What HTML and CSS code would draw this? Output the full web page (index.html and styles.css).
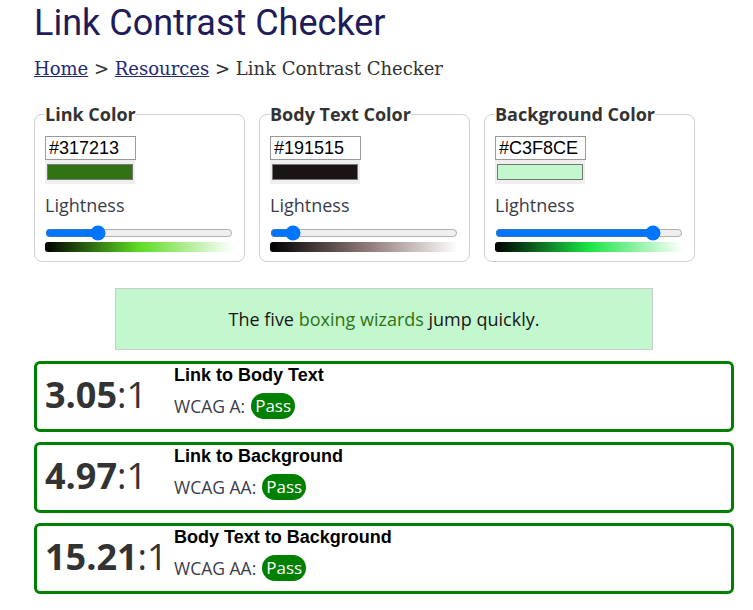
FILE: index.html
```html
<!DOCTYPE html>
<html lang="en">
<head>
<meta charset="utf-8">
<title>Link Contrast Checker</title>
<link rel="stylesheet" href="styles.css">
</head>
<body>
<main class="page">
  <h1 class="title">Link Contrast Checker</h1>
  <nav class="crumbs"><a href="#">Home</a> &gt; <a href="#">Resources</a> &gt; Link Contrast Checker</nav>

  <div class="pickers">
    <fieldset class="picker">
      <legend>Link Color</legend>
      <input class="hex" type="text" value="#317213">
      <div class="swatch-wrap"><div class="swatch swatch-link"></div></div>
      <label class="light-label">Lightness</label>
      <input class="slider" type="range" min="0" max="100" value="26">
      <div class="grad grad-link"></div>
    </fieldset>
    <fieldset class="picker">
      <legend>Body Text Color</legend>
      <input class="hex" type="text" value="#191515">
      <div class="swatch-wrap"><div class="swatch swatch-body"></div></div>
      <label class="light-label">Lightness</label>
      <input class="slider" type="range" min="0" max="100" value="9">
      <div class="grad grad-body"></div>
    </fieldset>
    <fieldset class="picker">
      <legend>Background Color</legend>
      <input class="hex" type="text" value="#C3F8CE">
      <div class="swatch-wrap"><div class="swatch swatch-bg"></div></div>
      <label class="light-label">Lightness</label>
      <input class="slider" type="range" min="0" max="100" value="87">
      <div class="grad grad-bg"></div>
    </fieldset>
  </div>

  <div class="sample"><p>The five <a href="#">boxing wizards</a> jump quickly.</p></div>

  <section class="results">
    <div class="card">
      <div class="ratio"><b>3.05</b>:1</div>
      <div class="info">
        <div class="info-title">Link to Body Text</div>
        <div class="wcag">WCAG A: <span class="pill">Pass</span></div>
      </div>
    </div>
    <div class="card">
      <div class="ratio"><b>4.97</b>:1</div>
      <div class="info">
        <div class="info-title">Link to Background</div>
        <div class="wcag">WCAG AA: <span class="pill">Pass</span></div>
      </div>
    </div>
    <div class="card">
      <div class="ratio"><b>15.21</b>:1</div>
      <div class="info">
        <div class="info-title">Body Text to Background</div>
        <div class="wcag">WCAG AA: <span class="pill">Pass</span></div>
      </div>
    </div>
  </section>
</main>
</body>
</html>
```
FILE: styles.css
```css
html, body { margin: 0; padding: 0; background: #fff; }
body { font-family: "Open Sans", sans-serif; color: #333; }

.page { padding: 0 0 0 34px; width: 700px; }

.title {
  font-family: Roboto, sans-serif;
  font-weight: 400;
  font-size: 36px;
  color: #1e1c5a;
  margin: 2px 0 0;
  line-height: 42px;
}

.crumbs {
  font-family: "DejaVu Serif", serif;
  font-size: 18px;
  line-height: 21px;
  color: #333;
  margin-top: 14px;
}
.crumbs a { color: #232a78; }

.pickers { display: flex; gap: 14px; margin-top: 23px; }

.picker {
  margin: 0;
  width: 211px;
  box-sizing: border-box;
  border: 1px solid #cfcfcf;
  border-radius: 8px;
  padding: 10px 10px 9px;
  display: flex;
  flex-direction: column;
  align-items: flex-start;
}
.picker legend {
  padding: 0;
  font-weight: 700;
  font-size: 18px;
  color: #333;
}

.hex {
  box-sizing: border-box;
  width: 91px;
  height: 24px;
  margin: 0;
  padding: 0 3px;
  border: 1px solid #999;
  font-family: "Liberation Sans", Arial, sans-serif;
  font-size: 18px;
  color: #000;
}

.swatch-wrap {
  box-sizing: border-box;
  width: 90px;
  height: 24px;
  padding: 4px 2px;
  background: #efefef;
}
.swatch { height: 100%; box-sizing: border-box; border: 1px solid #777; }
.swatch-link { background: #317213; }
.swatch-body { background: #191515; }
.swatch-bg { background: #c3f8ce; }

.light-label {
  margin-top: 9px;
  font-size: 18px;
  color: #3b3b4b;
  line-height: 24px;
}

.slider {
  width: 188px;
  height: 16px;
  margin: 8px 0 1px;
  accent-color: #0075ff;
}

.grad {
  width: 188px;
  height: 10px;
  border-radius: 3px 0 0 3px;
}
.grad-link { background: linear-gradient(to right, #000, hsl(101, 72%, 50%), #fff); }
.grad-body { background: linear-gradient(to right, #000, hsl(0, 9%, 50%), #fff); }
.grad-bg { background: linear-gradient(to right, #000, hsl(133, 79%, 50%), #fff); }

.sample {
  width: 538px;
  box-sizing: border-box;
  margin: 26px auto 11px;
  background: #c3f8ce;
  border: 1px solid #ccc;
  text-align: center;
}
.sample p {
  margin: 0;
  padding: 18px 0;
  font-size: 18px;
  line-height: 24px;
  color: #191515;
}
.sample a { color: #317213; text-decoration: none; }

.results { display: flex; flex-direction: column; gap: 10px; }

.card {
  display: flex;
  box-sizing: border-box;
  height: 71px;
  border: 3px solid #008000;
  border-radius: 6px;
  padding: 1px 0 10px;
}

.ratio {
  width: 137px;
  box-sizing: border-box;
  padding-left: 8px;
  align-self: center;
  font-size: 36px;
  line-height: 1;
  color: #333;
  margin-top: 5px;
}
.ratio b { font-weight: 700; }

.info-title {
  font-family: "Liberation Sans", Arial, sans-serif;
  font-weight: 700;
  font-size: 18px;
  line-height: 21px;
  color: #000;
  margin-bottom: 7px;
}

.wcag {
  display: flex;
  align-items: center;
  gap: 6px;
  font-size: 17.5px;
  color: #3b3b4b;
  height: 26px;
}

.pill {
  display: inline-block;
  height: 26px;
  line-height: 26px;
  padding: 0 4px;
  border-radius: 13px;
  background: #008000;
  color: #fff;
  font-size: 17px;
}
```
